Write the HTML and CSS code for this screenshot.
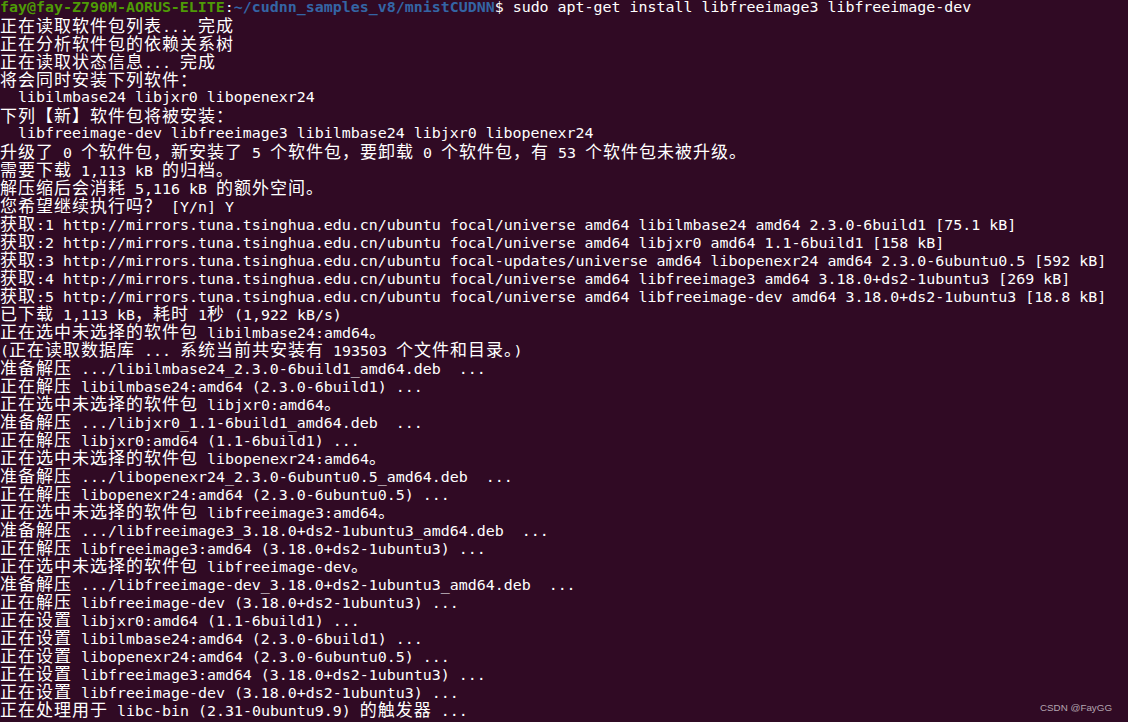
FILE: index.html
```html
<!DOCTYPE html>
<html lang="zh-CN">
<head>
<meta charset="utf-8">
<title>Terminal</title>
<link rel="stylesheet" href="styles.css">
</head>
<body>
<main class="term">
<div class="ln"><span class="g">fay@fay-Z790M-AORUS-ELITE</span>:<span class="bl">~/cudnn_samples_v8/mnistCUDNN</span>$ sudo apt-get install libfreeimage3 libfreeimage-dev</div>
<div class="ln"><span class="c">正在读取软件包列表</span>... <span class="c">完成</span></div>
<div class="ln"><span class="c">正在分析软件包的依赖关系树</span></div>
<div class="ln"><span class="c">正在读取状态信息</span>... <span class="c">完成</span></div>
<div class="ln"><span class="c">将会同时安装下列软件：</span></div>
<div class="ln">  libilmbase24 libjxr0 libopenexr24</div>
<div class="ln"><span class="c">下列【新】软件包将被安装：</span></div>
<div class="ln">  libfreeimage-dev libfreeimage3 libilmbase24 libjxr0 libopenexr24</div>
<div class="ln"><span class="c">升级了</span> 0 <span class="c">个软件包，新安装了</span> 5 <span class="c">个软件包，要卸载</span> 0 <span class="c">个软件包，有</span> 53 <span class="c">个软件包未被升级。</span></div>
<div class="ln"><span class="c">需要下载</span> 1,113 kB <span class="c">的归档。</span></div>
<div class="ln"><span class="c">解压缩后会消耗</span> 5,116 kB <span class="c">的额外空间。</span></div>
<div class="ln"><span class="c">您希望继续执行吗？</span> [Y/n] Y</div>
<div class="ln"><span class="c">获取</span>:1 http://mirrors.tuna.tsinghua.edu.cn/ubuntu focal/universe amd64 libilmbase24 amd64 2.3.0-6build1 [75.1 kB]</div>
<div class="ln"><span class="c">获取</span>:2 http://mirrors.tuna.tsinghua.edu.cn/ubuntu focal/universe amd64 libjxr0 amd64 1.1-6build1 [158 kB]</div>
<div class="ln"><span class="c">获取</span>:3 http://mirrors.tuna.tsinghua.edu.cn/ubuntu focal-updates/universe amd64 libopenexr24 amd64 2.3.0-6ubuntu0.5 [592 kB]</div>
<div class="ln"><span class="c">获取</span>:4 http://mirrors.tuna.tsinghua.edu.cn/ubuntu focal/universe amd64 libfreeimage3 amd64 3.18.0+ds2-1ubuntu3 [269 kB]</div>
<div class="ln"><span class="c">获取</span>:5 http://mirrors.tuna.tsinghua.edu.cn/ubuntu focal/universe amd64 libfreeimage-dev amd64 3.18.0+ds2-1ubuntu3 [18.8 kB]</div>
<div class="ln"><span class="c">已下载</span> 1,113 kB<span class="c">，耗时</span> 1<span class="c">秒</span> (1,922 kB/s)</div>
<div class="ln"><span class="c">正在选中未选择的软件包</span> libilmbase24:amd64<span class="c">。</span></div>
<div class="ln">(<span class="c">正在读取数据库</span> ... <span class="c">系统当前共安装有</span> 193503 <span class="c">个文件和目录。</span>)</div>
<div class="ln"><span class="c">准备解压</span> .../libilmbase24_2.3.0-6build1_amd64.deb  ...</div>
<div class="ln"><span class="c">正在解压</span> libilmbase24:amd64 (2.3.0-6build1) ...</div>
<div class="ln"><span class="c">正在选中未选择的软件包</span> libjxr0:amd64<span class="c">。</span></div>
<div class="ln"><span class="c">准备解压</span> .../libjxr0_1.1-6build1_amd64.deb  ...</div>
<div class="ln"><span class="c">正在解压</span> libjxr0:amd64 (1.1-6build1) ...</div>
<div class="ln"><span class="c">正在选中未选择的软件包</span> libopenexr24:amd64<span class="c">。</span></div>
<div class="ln"><span class="c">准备解压</span> .../libopenexr24_2.3.0-6ubuntu0.5_amd64.deb  ...</div>
<div class="ln"><span class="c">正在解压</span> libopenexr24:amd64 (2.3.0-6ubuntu0.5) ...</div>
<div class="ln"><span class="c">正在选中未选择的软件包</span> libfreeimage3:amd64<span class="c">。</span></div>
<div class="ln"><span class="c">准备解压</span> .../libfreeimage3_3.18.0+ds2-1ubuntu3_amd64.deb  ...</div>
<div class="ln"><span class="c">正在解压</span> libfreeimage3:amd64 (3.18.0+ds2-1ubuntu3) ...</div>
<div class="ln"><span class="c">正在选中未选择的软件包</span> libfreeimage-dev<span class="c">。</span></div>
<div class="ln"><span class="c">准备解压</span> .../libfreeimage-dev_3.18.0+ds2-1ubuntu3_amd64.deb  ...</div>
<div class="ln"><span class="c">正在解压</span> libfreeimage-dev (3.18.0+ds2-1ubuntu3) ...</div>
<div class="ln"><span class="c">正在设置</span> libjxr0:amd64 (1.1-6build1) ...</div>
<div class="ln"><span class="c">正在设置</span> libilmbase24:amd64 (2.3.0-6build1) ...</div>
<div class="ln"><span class="c">正在设置</span> libopenexr24:amd64 (2.3.0-6ubuntu0.5) ...</div>
<div class="ln"><span class="c">正在设置</span> libfreeimage3:amd64 (3.18.0+ds2-1ubuntu3) ...</div>
<div class="ln"><span class="c">正在设置</span> libfreeimage-dev (3.18.0+ds2-1ubuntu3) ...</div>
<div class="ln"><span class="c">正在处理用于</span> libc-bin (2.31-0ubuntu9.9) <span class="c">的触发器</span> ...</div>
</main>
<div class="wm">CSDN @FayGG</div>
</body>
</html>
```

FILE: styles.css
```css
html, body {
  margin: 0;
  padding: 0;
  height: 100%;
  background: #300a24;
  overflow: hidden;
}

.term {
  padding: 0 0 0 0;
  margin-top: -2px;
  color: #ffffff;
  font-family: "DejaVu Sans Mono", "Liberation Mono", monospace;
  font-size: 14.95px;
}

.ln {
  height: 18px;
  line-height: 18px;
  white-space: pre;
}

.g {
  color: #4e9a06;
  font-weight: bold;
}

.bl {
  color: #3465a4;
  font-weight: bold;
}

.c {
  font-family: "Noto Sans CJK SC", "Noto Sans CJK JP", sans-serif;
  font-size: 17px;
  letter-spacing: 1px;
  line-height: 18px;
}

.wm {
  position: absolute;
  right: 16px;
  bottom: 9px;
  font-family: "Liberation Sans", Arial, sans-serif;
  font-size: 9.8px;
  color: #b3a5b0;
}
```
